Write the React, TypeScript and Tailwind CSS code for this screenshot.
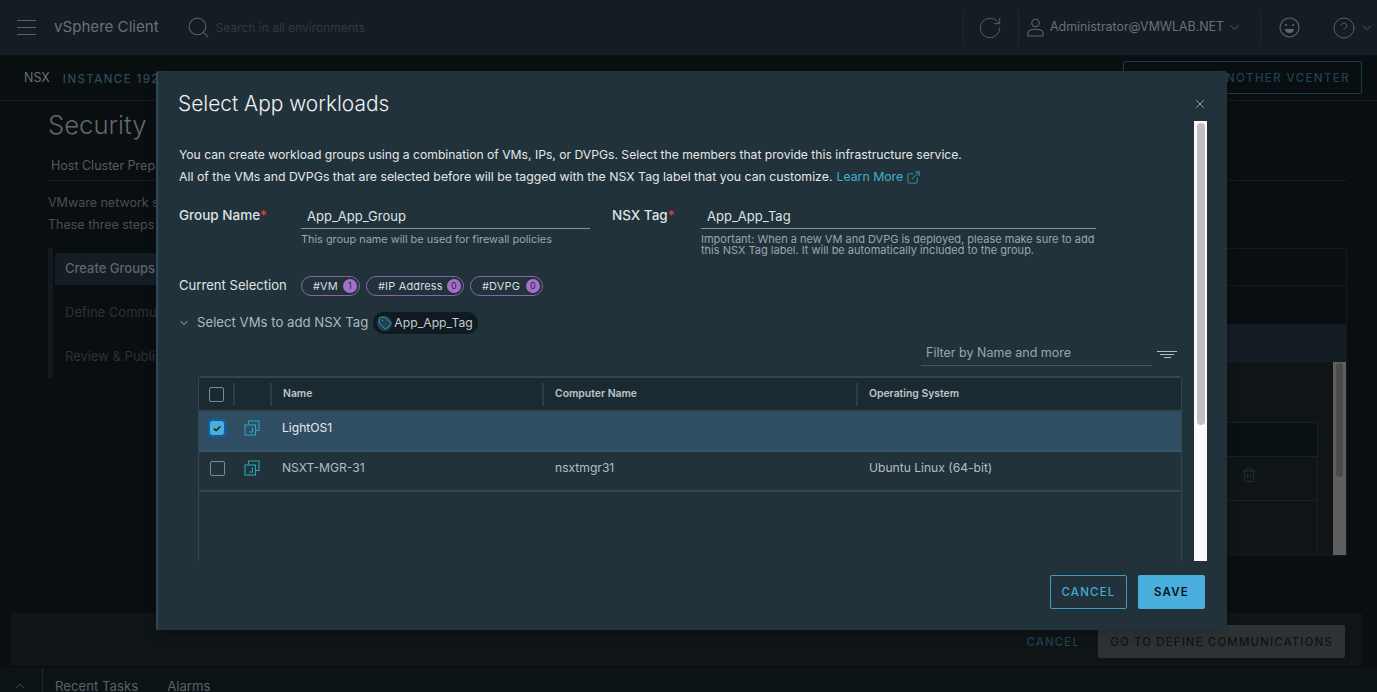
import React from 'react';
import { ChevronDown, ChevronUp, CircleHelp, ExternalLink, RotateCw, Search, Tag, Trash2, X } from 'lucide-react';

const VmIcon = () => (
  <svg width="16" height="16" viewBox="0 0 16 16" fill="none" stroke="#2aa5bd" strokeWidth="1.1">
    <path d="M4.500 4V1h10.500v9.500H12" />
    <rect x="1" y="5" width="10.500" height="10" />
    <path d="M8.500 7.500v4.500H5" />
  </svg>
);

const UserIcon = () => (
  <svg width="17" height="19" viewBox="0 0 17 19" fill="none" stroke="#5f676c" strokeWidth="1.1">
    <circle cx="8.5" cy="5" r="3.7" />
    <path d="M1 18v-3.500c0-1.600 3-3.200 7.500-3.200s7.500 1.600 7.500 3.200V18z" />
  </svg>
);

const SmileIcon = () => (
  <svg width="21" height="21" viewBox="0 0 21 21" fill="none" stroke="#5f676c" strokeWidth="1.1" className="ml-[18px]">
    <circle cx="10.500" cy="10.500" r="9.500" />
    <circle cx="7" cy="8" r="1" fill="#5f676c" stroke="none" />
    <circle cx="14" cy="8" r="1" fill="#5f676c" stroke="none" />
    <path d="M6 12h9c0 2.500-2 4-4.500 4S6 14.500 6 12z" fill="#5f676c" stroke="none" />
  </svg>
);

const Pill = ({ label, count, className }: { label: string; count: number; className: string }) => (
  <div className={`flex h-[20px] items-center justify-between rounded-full border border-[#8a63a8] pl-[11px] pr-[2px] text-[11px] tracking-[0.15px] text-[#d8dde0] ${className}`}>
    <span>{label}</span>
    <span className="flex h-[14px] w-[14px] items-center justify-center rounded-full bg-[#a56fc9] text-[9px] text-[#1d2a31]">{count}</span>
  </div>
);

const Checkbox = ({ checked }: { checked?: boolean }) =>
  checked ? (
    <div className="flex h-[14px] w-[14px] items-center justify-center rounded-[2px] bg-[#4aaed9] outline-2 outline-[#0f5fa8] text-[10px] leading-none font-bold text-[#0b1418]">✓</div>
  ) : (
    <div className="h-[15px] w-[15px] rounded-[2px] border border-[#7d8b92]" />
  );

const tableGrid = 'grid grid-cols-[36px_37px_272px_314px_1fr]';

const HeadCell = ({ children }: { children?: React.ReactNode }) => (
  <div className="flex h-[23px] items-center border-r-2 border-[#2c3f49] pl-[11px] text-[10.400px] font-semibold text-[#bcc5ca] last:border-r-0">{children}</div>
);

const VmRow = ({ name, computer, os, selected }: { name: string; computer?: string; os?: string; selected?: boolean }) => (
  <div className={`${tableGrid} h-[40px] items-start border-b-2 pt-[6px] text-[12.100px] ${selected ? 'border-[#3a5468] bg-[#304e63] text-[#e6eaec]' : 'border-[#33454f] text-[#b4bdc2]'}`}>
    <div className="flex h-[20px] items-center justify-center"><Checkbox checked={selected} /></div>
    <div className="flex h-[20px] items-center justify-center pr-[3px]"><VmIcon /></div>
    <div className="flex h-[20px] items-center pl-[10px]">{name}</div>
    <div className="flex h-[20px] items-center pl-[11px]">{computer}</div>
    <div className="flex h-[20px] items-center pl-[11px]">{os}</div>
  </div>
);

const Modal = () => (
  <div className="absolute top-[71px] left-[156px] flex h-[559px] w-[1071px] flex-col rounded-[2px] border-l-2 border-[#2b4a5c] bg-[#22323a] shadow-lg">
    <div className="flex h-[50px] items-center justify-between pt-[15px] pr-[20px] pl-[20px]">
      <h2 className="text-[20.900px] font-light text-[#eef1f2]">Select App workloads</h2>
      <X size={14} strokeWidth={1.2} className="mt-[1px] text-[#c4ccd0]" />
    </div>
    <div className="flex h-[440px] pr-[20px]">
      <div className="min-w-0 flex-1 overflow-hidden pt-[23px] pr-[13px] pl-[21px]">
        <p className="text-[12.150px] leading-[22px] text-[#e3e7e9]">You can create workload groups using a combination of VMs, IPs, or DVPGs. Select the members that provide this infrastructure service.</p>
        <p className="flex items-center text-[12.300px] leading-[22px] text-[#e3e7e9]">
          All of the VMs and DVPGs that are selected before will be tagged with the NSX Tag label that you can customize.
          <span className="ml-[4px] text-[#3fb0cf]">Learn More</span>
          <ExternalLink size={15} strokeWidth={1.2} className="ml-[3px] text-[#3fb0cf]" />
        </p>

        <div className="mt-[17px] flex items-start">
          <label className="w-[122px] text-[13.500px] font-medium text-[#dfe3e5]">Group Name<span className="text-[#e0443e]">*</span></label>
          <div className="w-[289px]">
            <div className="h-[24px] border-b border-[#84959d] pl-[6px] text-[13px] leading-[22px] text-[#dfe3e5]">App_App_Group</div>
            <p className="pt-[5px] text-[10.900px] leading-[11px] text-[#9aa6ac]">This group name will be used for firewall policies</p>
          </div>
          <label className="ml-[22px] w-[89px] text-[13.500px] font-medium text-[#dfe3e5]">NSX Tag<span className="text-[#e0443e]">*</span></label>
          <div className="w-[395px]">
            <div className="h-[24px] border-b border-[#84959d] pl-[6px] text-[13px] leading-[22px] text-[#dfe3e5]">App_App_Tag</div>
            <p className="pt-[5px] text-[11px] leading-[11px] text-[#9aa6ac]">Important: When a new VM and DVPG is deployed, please make sure to add this NSX Tag label. It will be automatically included to the group.</p>
          </div>
        </div>

        <div className="mt-[18px] flex items-center">
          <span className="w-[122px] pt-[1px] text-[13.100px] text-[#dfe3e5]">Current Selection</span>
          <div className="mt-[2px] flex gap-[6px]">
            <Pill label="#VM" count={1} className="w-[59px]" />
            <Pill label="#IP Address" count={0} className="w-[98px]" />
            <Pill label="#DVPG" count={0} className="w-[73px]" />
          </div>
        </div>

        <div className="mt-[16px] flex h-[22px] items-center">
          <ChevronDown size={12} className="-ml-[1px] text-[#aeb8bd]" />
          <span className="ml-[7px] text-[13.200px] text-[#aeb8bd]">Select VMs to add NSX Tag</span>
          <div className="ml-[5px] flex h-[22px] w-[105px] items-center rounded-full bg-[#0f1b21] pl-[4px] text-[12.200px] text-[#c4ccd0]">
            <span className="mr-[2px] flex h-[15px] w-[15px] shrink-0 items-center justify-center rounded-full bg-[#22404f]">
              <Tag size={14} strokeWidth={1.4} className="text-[#3aaed0]" />
            </span>
            App_App_Tag
          </div>
        </div>

        <div className="mt-[8px] mr-[4px] flex items-center justify-end">
          <div className="h-[24px] w-[231px] border-b border-[#46565e] pl-[5px] text-[12.500px] leading-[22px] text-[#9aa6ac]">Filter by Name and more</div>
          <div className="ml-[5px] flex w-[20px] flex-col items-center gap-[2px]">
            <span className="h-[1px] w-[20px] bg-[#b4bdc2]" />
            <span className="h-[1px] w-[14px] bg-[#b4bdc2]" />
            <span className="h-[1px] w-[7px] bg-[#b4bdc2]" />
          </div>
        </div>

        <div className="mt-[10px] ml-[19px] h-[186px] w-[984px] rounded-t-[3px] border-x border-t-2 border-[#33454f]">
          <div className={`${tableGrid} h-[34px] items-center border-b-2 border-[#33454f] bg-[#1b2a31]`}>
            <div className="flex h-[23px] items-center justify-center border-r-2 border-[#2c3f49]"><Checkbox /></div>
            <HeadCell />
            <HeadCell>Name</HeadCell>
            <HeadCell>Computer Name</HeadCell>
            <HeadCell>Operating System</HeadCell>
          </div>
          <VmRow name="LightOS1" selected />
          <VmRow name="NSXT-MGR-31" computer="nsxtmgr31" os="Ubuntu Linux (64-bit)" />
        </div>
      </div>
      <div className="flex w-[13px] shrink-0 justify-center bg-[#fafafa] pt-[2px]">
        <div className="h-[302px] w-[8px] rounded-full bg-[#c0c0c0]" />
      </div>
    </div>
    <div className="flex justify-end gap-[11px] pt-[14px] pr-[22px]">
      <button className="h-[34px] w-[77px] rounded-[2px] border border-[#3c9cc4] pt-[2px] text-[11.500px] font-medium tracking-[1.200px] text-[#46a9d2]">CANCEL</button>
      <button className="h-[34px] w-[67px] rounded-[2px] bg-[#49aedb] pt-[2px] text-[11.500px] font-semibold tracking-[1.200px] text-[#0b1418]">SAVE</button>
    </div>
  </div>
);

export default function App() {
  return (
    <div className="relative flex h-[692px] w-[1377px] flex-col overflow-hidden bg-[#090e11] font-['Inter',sans-serif]">
      <header className="flex h-[55px] shrink-0 items-center bg-[#151c24] text-[#6a7175]">
        <div className="ml-[17px] flex w-[19px] flex-col gap-[6px]">
          <span className="h-[1px] bg-[#5b6266]" />
          <span className="h-[1px] bg-[#5b6266]" />
          <span className="h-[1px] bg-[#5b6266]" />
        </div>
        <span className="ml-[18px] text-[15.100px]">vSphere Client</span>
        <Search size={25} strokeWidth={1.1} className="ml-[27px] text-[#565d61]" />
        <span className="ml-[5px] flex-1 text-[12px] text-[#33393f]">Search in all environments</span>
        <div className="flex h-[37px] w-[56px] items-center justify-center border-x border-[#20272e] pr-[2px]">
          <RotateCw size={26} strokeWidth={0.9} className="text-[#565d61]" />
        </div>
        <div className="flex h-[37px] w-[242px] items-center border-r border-[#20272e] pl-[8px]">
          <UserIcon />
          <span className="ml-[6px] text-[12.400px]">Administrator@VMWLAB.NET</span>
          <ChevronDown size={15} strokeWidth={1.3} className="ml-[3px]" />
        </div>
        <SmileIcon />
        <CircleHelp size={24} strokeWidth={0.9} className="ml-[32px] text-[#5f676c]" />
        <ChevronDown size={14} strokeWidth={1.3} className="mr-[3px] ml-[4px]" />
      </header>

      <div className="flex h-[46px] shrink-0 items-center border-b border-[#161d22] pr-[15px] pl-[24px]">
        <span className="pt-[2px] text-[12.500px] text-[#6a7175]">NSX</span>
        <span className="ml-[13px] flex-1 pt-[4px] text-[11.500px] font-medium tracking-[1.400px] text-[#2f4c59]">INSTANCE 192.168.1.10</span>
        <button className="h-[33px] w-[239px] rounded-[2px] border border-[#1c3a4b] pt-[2px] pr-[11px] text-right text-[11.500px] font-medium tracking-[1.400px] text-[#1f4256]">SELECT ANOTHER VCENTER</button>
      </div>

      <main className="flex min-h-0 flex-1 flex-col pt-[7px] pr-[30px] pl-[48px]">
        <h1 className="text-[25.700px] leading-[34px] font-light text-[#62686c]">Security</h1>
        <div className="mt-[12px] flex h-[27px] border-b border-[#161d22] pl-[3px] text-[12.500px] leading-[24px] text-[#565c60]">Host Cluster Preparation</div>
        <p className="mt-[11px] text-[12.500px] leading-[22px] text-[#484e52]">VMware network security</p>
        <p className="text-[12.500px] leading-[22px] text-[#484e52]">These three steps</p>
        <div className="mt-[12px] flex h-[308px] gap-[2px]">
          <div className="h-[130px] w-[5px] shrink-0 bg-[#13191d]" />
          <div className="w-[151px] shrink-0 pt-[5px]">
            <div className="flex h-[32px] items-center rounded-[2px] bg-[#141d24] pl-[10px] text-[13px] font-medium text-[#5f666a]">Create Groups</div>
            <div className="mt-[6px] flex h-[44px] items-center pl-[10px] text-[13px] text-[#2d3236]">Define Commu</div>
            <div className="flex h-[44px] items-center pl-[10px] text-[13px] text-[#2d3236]">Review &amp; Publish</div>
          </div>
          <div className="flex h-[308px] min-w-0 flex-1 flex-col rounded-[2px] border border-[#13191d]">
            <div className="h-[37px] shrink-0 border-b border-[#13191d]" />
            <div className="h-[38px] shrink-0" />
            <div className="h-[38px] shrink-0 bg-[#141c24]" />
            <div className="flex min-h-0 flex-1 bg-[#0f1417]">
              <div className="flex-1 pt-[60px]">
                <div className="ml-auto h-[134px] w-[160px] rounded-t-[2px] border-x border-t border-[#1a2125]">
                  <div className="h-[34px] border-b border-[#1a2125] bg-[#0a1114]" />
                  <div className="flex h-[44px] items-center justify-end border-b border-[#1a2125] pr-[60px] pb-[7px]">
                    <Trash2 size={16} strokeWidth={1} className="text-[#1e4256]" />
                  </div>
                </div>
              </div>
              <div className="ml-[15px] w-[13px] bg-[#5f5f5f] px-[3px] pt-[1px]">
                <div className="h-[114px] rounded-full bg-[#4a4a4a]" />
              </div>
            </div>
          </div>
        </div>
      </main>

      <div className="mr-[15px] ml-[11px] flex h-[53px] shrink-0 items-center justify-end bg-[#0f1417] pt-[3px] pr-[17px]">
        <span className="pt-[3px] text-[11.500px] font-medium tracking-[1.100px] text-[#1f4252]">CANCEL</span>
        <button className="ml-[18px] h-[33px] w-[247px] rounded-[2px] bg-[#2e3234] pt-[3px] text-[11.500px] font-medium tracking-[1.100px] text-[#0f1417]">GO TO DEFINE COMMUNICATIONS</button>
      </div>

      <div className="mt-[2px] flex h-[24px] shrink-0 items-start overflow-hidden bg-[#0c1317] text-[13.200px] text-[#5a6165]">
        <div className="flex h-[24px] w-[43px] justify-center border-r border-[#20282d] pt-[11px] pr-[3px]">
          <ChevronUp size={14} strokeWidth={1.3} />
        </div>
        <span className="ml-[12px] pt-[9px]">Recent Tasks</span>
        <span className="ml-[29px] pt-[9px]">Alarms</span>
      </div>

      <Modal />
    </div>
  );
}
